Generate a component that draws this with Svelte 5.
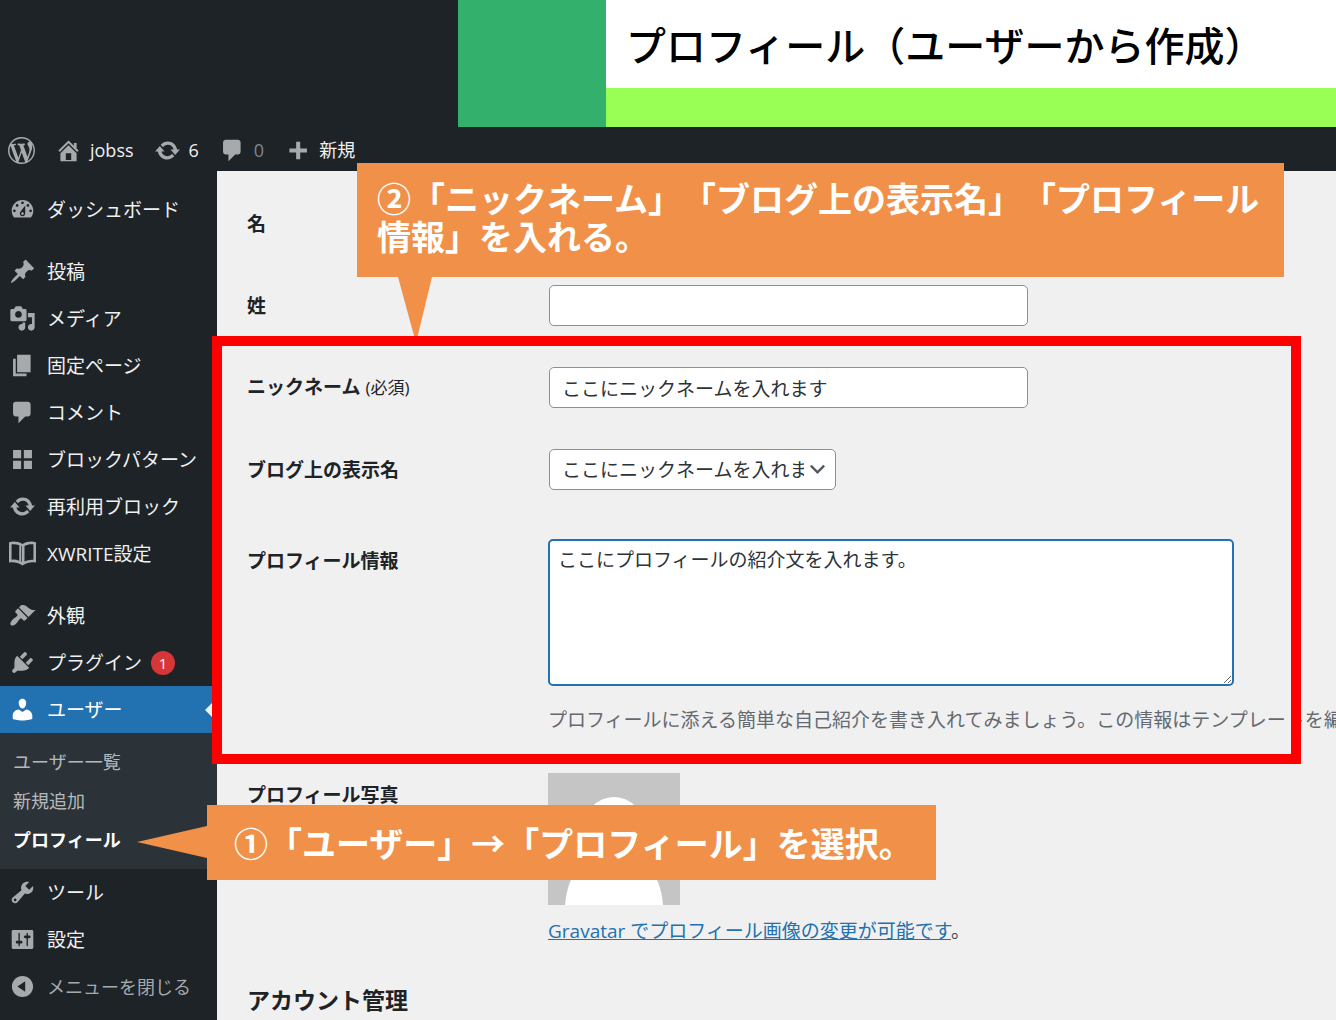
<script>
	const icons = {
		wordpress:
			'M20 10c0-5.51-4.49-10-10-10C4.48 0 0 4.49 0 10c0 5.52 4.48 10 10 10 5.51 0 10-4.48 10-10zM7.78 15.37L4.37 6.22c.55-.02 1.17-.08 1.17-.08.5-.06.44-1.13-.06-1.11 0 0-1.45.11-2.37.11-.18 0-.37 0-.58-.01C4.12 2.69 6.87 1.11 10 1.11c2.33 0 4.45.87 6.05 2.34-.68-.11-1.65.39-1.65 1.58 0 .74.45 1.36.9 2.1.35.61.55 1.36.55 2.46 0 1.49-1.4 5-1.4 5l-3.03-8.37c.54-.02.82-.17.82-.17.5-.05.44-1.25-.06-1.22 0 0-1.44.12-2.38.12-.87 0-2.33-.12-2.33-.12-.5-.03-.56 1.2-.06 1.22l.92.08 1.26 3.41zM17.41 10c.24-.64.74-1.87.43-4.25.7 1.29 1.05 2.71 1.05 4.25 0 3.29-1.73 6.24-4.4 7.78.97-2.59 1.94-5.2 2.92-7.78zM6.1 18.09C3.12 16.65 1.11 13.53 1.11 10c0-1.3.23-2.48.72-3.59C3.25 10.3 4.67 14.2 6.1 18.09zm4.03-6.63l2.58 6.98c-.86.29-1.76.45-2.71.45-.79 0-1.57-.11-2.29-.33.81-2.38 1.62-4.74 2.42-7.1z',
		home: 'M16 8.5l1.53 1.53-1.06 1.06L10 4.6l-6.47 6.49-1.06-1.06L10 2.5l4 4v-2h2v4zm-6-2.46l6 5.99V18H4v-5.97zM12 17v-5H8v5h4z',
		update:
			'M10.2 3.28c3.53 0 6.43 2.61 6.92 6h2.08l-3.5 4-3.5-4h2.32c-.45-1.97-2.21-3.45-4.32-3.45-1.45 0-2.73.71-3.54 1.78L4.95 5.66C6.23 4.2 8.11 3.28 10.2 3.28zm-.4 13.44c-3.52 0-6.43-2.61-6.92-6H.8l3.5-4c1.17 1.33 2.33 2.67 3.5 4H5.48c.45 1.97 2.21 3.45 4.32 3.45 1.45 0 2.73-.71 3.54-1.78l1.71 1.95c-1.28 1.46-3.15 2.38-5.25 2.38z',
		comment:
			'M5 2h9c1.1 0 2 .9 2 2v7c0 1.1-.9 2-2 2h-2l-5 5v-5H5c-1.1 0-2-.9-2-2V4c0-1.1.9-2 2-2z',
		plus: 'M17 8.5v3h-5v5H9v-5H4v-3h5v-5h3v5h5z',
		dashboard:
			'M3.76 16h12.48c1.1-1.37 1.76-3.11 1.76-5 0-4.42-3.58-8-8-8s-8 3.58-8 8c0 1.89.66 3.63 1.76 5zM10 4c.55 0 1 .45 1 1s-.45 1-1 1-1-.45-1-1 .45-1 1-1zM6 6c.55 0 1 .45 1 1s-.45 1-1 1-1-.45-1-1 .45-1 1-1zm8 0c.55 0 1 .45 1 1s-.45 1-1 1-1-.45-1-1 .45-1 1-1zm-5.37 5.55L12 7v6c0 1.1-.9 2-2 2s-2-.9-2-2c0-.57.24-1.08.63-1.45zM4 10c.55 0 1 .45 1 1s-.45 1-1 1-1-.45-1-1 .45-1 1-1zm12 0c.55 0 1 .45 1 1s-.45 1-1 1-1-.45-1-1 .45-1 1-1zm-5 3c0-.55-.45-1-1-1s-1 .45-1 1 .45 1 1 1 1-.45 1-1z',
		post: 'M10.44 3.02l1.82-1.82 6.36 6.35-1.83 1.82c-1.05-.68-2.48-.57-3.41.36l-.75.75c-.92.93-1.04 2.35-.35 3.41l-1.83 1.82-2.41-2.41-2.8 2.79c-.42.42-3.38 2.71-3.8 2.29s1.86-3.39 2.28-3.81l2.79-2.79L4.1 9.36l1.83-1.82c1.05.69 2.48.57 3.4-.36l.75-.75c.93-.92 1.05-2.35.36-3.41z',
		media:
			'M13 11V4c0-.55-.45-1-1-1h-1.67L9 1H5L3.67 3H2c-.55 0-1 .45-1 1v7c0 .55.45 1 1 1h10c.55 0 1-.45 1-1zM7 4.5c1.38 0 2.5 1.12 2.5 2.5S8.38 9.5 7 9.5 4.5 8.38 4.5 7 5.62 4.5 7 4.5zM14 6h5v10.5c0 1.38-1.12 2.5-2.5 2.5S14 17.88 14 16.5s1.12-2.5 2.5-2.5c.17 0 .34.02.5.05V9h-3V6zm-4 8.05V13h2v3.5c0 1.38-1.12 2.5-2.5 2.5S7 17.88 7 16.5 8.12 14 9.5 14c.17 0 .34.02.5.05z',
		page: 'M6 15V2h10v13H6zm-1 1h8v2H3V5h2v11z',
		blocks: 'M9 9V3H3v6h6zm8 0V3h-6v6h6zm-8 8v-6H3v6h6zm8 0v-6h-6v6h6z',
		book: 'M0 1.6c3.4-.9 6.6-.5 10 1.3 3.4-1.8 6.6-2.2 10-1.3v15c-3.6-.5-6.7 0-10 2.3-3.3-2.3-6.4-2.800-10-2.3zM1.9 3.2v11.400c2-.2 3.900 0 5.700.7V3.900c-1.700-.7-3.700-.9-5.700-.7zM9.100 4.500v11.500l.5.300V4.700zM11.500 4.500v11.500c2.100-1.100 4.300-1.600 6.600-1.400V3.200c-2.300-.3-4.500.1-6.600 1.300z',
		brush:
			'M14.48 11.06L7.41 3.99l1.5-1.5c.5-.56 2.3-.47 3.51.32 1.21.8 1.43 1.28 2.91 2.1 1.18.64 2.45 1.26 4.45.85zm-.71.71L6.7 4.7 4.93 6.47c-.39.39-.39 1.02 0 1.41l1.06 1.06c.39.39.39 1.03 0 1.42-.6.6-1.43 1.11-2.21 1.69-.35.26-.7.53-1.01.84C1.43 14.23.4 16.08 1.4 17.07c.99 1 2.84-.03 4.18-1.36.31-.31.58-.66.85-1.02.57-.78 1.08-1.61 1.69-2.21.39-.39 1.02-.39 1.41 0l1.06 1.06c.39.39 1.02.39 1.41 0z',
		plugin:
			'M13.11 4.36L9.87 7.6 8 5.73l3.24-3.24c.35-.34 1.05-.2 1.56.32.52.51.66 1.21.31 1.55zm-8 1.77l.91-1.12 9.01 9.01-1.19.84c-.71.71-2.63 1.16-3.82 1.16H6.14L4.9 17.26c-.59.59-1.54.59-2.12 0-.59-.58-.59-1.53 0-2.12l1.24-1.24v-3.88c0-1.13.4-3.19 1.09-3.89zm7.26 3.97l3.24-3.24c.34-.35 1.04-.21 1.55.31.52.51.66 1.21.31 1.55l-3.24 3.25z',
		user: 'M10 9.25c-2.27 0-2.73-3.44-2.73-3.44C7 4.02 7.82 2 9.97 2c2.16 0 2.98 2.02 2.71 3.81 0 0-.41 3.44-2.68 3.44zm0 2.57L12.72 10c2.39 0 4.52 2.33 4.52 4.53v2.49s-3.65 1.13-7.24 1.13c-3.65 0-7.24-1.13-7.24-1.13v-2.49c0-2.25 1.94-4.48 4.47-4.48z',
		tools: 'M16.68 9.77c-1.34 1.34-3.3 1.67-4.95.99l-5.41 6.52c-.99.99-2.59.99-3.58 0s-.99-2.59 0-3.57l6.52-5.42c-.68-1.65-.35-3.61.99-4.95 1.28-1.28 3.12-1.62 4.72-1.06l-2.89 2.89 2.82 2.82 2.86-2.87c.53 1.58.18 3.39-1.08 4.65zM3.81 16.21c.4.39 1.04.39 1.43 0 .4-.4.4-1.04 0-1.43-.39-.4-1.03-.4-1.43 0-.39.39-.39 1.03 0 1.43z',
		settings:
			'M18 16V4c0-.55-.45-1-1-1H3c-.55 0-1 .45-1 1v12c0 .55.45 1 1 1h14c.55 0 1-.45 1-1zM8 11h1c.55 0 1 .45 1 1s-.45 1-1 1H8v1.5c0 .28-.22.5-.5.5s-.5-.22-.5-.5V13H6c-.55 0-1-.45-1-1s.45-1 1-1h1V5.5c0-.28.22-.5.5-.5s.5.22.5.5V11zm5-2h-1c-.55 0-1-.45-1-1s.45-1 1-1h1V5.5c0-.28.22-.5.5-.5s.5.22.5.5V7h1c.55 0 1 .45 1 1s-.45 1-1 1h-1v5.5c0 .28-.22.5-.5.5s-.5-.22-.5-.5V9z',
		collapse:
			'M10 2.16c4.33 0 7.84 3.51 7.84 7.84s-3.51 7.84-7.84 7.84S2.16 14.33 2.16 10 5.71 2.16 10 2.16zm2 11.72V6.12L6.18 9.97z'
	};

	const menuGroups = [
		[{ icon: 'dashboard', label: 'ダッシュボード' }],
		[
			{ icon: 'post', label: '投稿' },
			{ icon: 'media', label: 'メディア' },
			{ icon: 'page', label: '固定ページ' },
			{ icon: 'comment', label: 'コメント' },
			{ icon: 'blocks', label: 'ブロックパターン' },
			{ icon: 'update', label: '再利用ブロック' },
			{ icon: 'book', label: 'XWRITE設定' }
		],
		[
			{ icon: 'brush', label: '外観' },
			{ icon: 'plugin', label: 'プラグイン', badge: 1 },
			{
				icon: 'user',
				label: 'ユーザー',
				current: true,
				children: ['ユーザー一覧', '新規追加', 'プロフィール']
			},
			{ icon: 'tools', label: 'ツール' },
			{ icon: 'settings', label: '設定' }
		]
	];

	let firstName = $state('');
	let lastName = $state('');
	let nickname = $state('ここにニックネームを入れます');
	let bio = $state('ここにプロフィールの紹介文を入れます。');
</script>

{#snippet icon(name)}
	<svg class="icon" viewBox="0 0 20 20" fill-rule="evenodd" aria-hidden="true">
		<path d={icons[name]} />
	</svg>
{/snippet}

<div class="page">
	<header class="banner">
		<div class="banner-block"></div>
		<h1>プロフィール（ユーザーから作成）</h1>
	</header>

	<nav class="adminbar">
		<a href="#wp" aria-label="WordPress">{@render icon('wordpress')}</a>
		<a href="#site">{@render icon('home')}<span>jobss</span></a>
		<a href="#updates">{@render icon('update')}<span>6</span></a>
		<a href="#comments" class="muted">{@render icon('comment')}<span>0</span></a>
		<a href="#new">{@render icon('plus')}<span>新規</span></a>
	</nav>

	<div class="columns">
		<nav class="sidebar">
			{#each menuGroups as group}
				<ul class="group">
					{#each group as item}
						<li>
							<a href="#menu" class="item" class:current={item.current}>
								{@render icon(item.icon)}
								<span>{item.label}</span>
								{#if item.badge}<span class="badge">{item.badge}</span>{/if}
							</a>
							{#if item.children}
								<ul class="submenu">
									{#each item.children as child}
										<li><a href="#sub" class:active={child === 'プロフィール'}>{child}</a></li>
									{/each}
								</ul>
							{/if}
						</li>
					{/each}
				</ul>
			{/each}
			<button type="button" class="item collapse">
				{@render icon('collapse')}<span>メニューを閉じる</span>
			</button>
		</nav>

		<main>
			<form>
				<div class="row">
					<label for="first">名</label>
					<div><input id="first" type="text" bind:value={firstName} /></div>
				</div>
				<div class="row">
					<label for="last">姓</label>
					<div><input id="last" type="text" bind:value={lastName} /></div>
				</div>
				<div class="row">
					<label for="nick">ニックネーム <small>(必須)</small></label>
					<div><input id="nick" type="text" bind:value={nickname} /></div>
				</div>
				<div class="row">
					<label for="display">ブログ上の表示名</label>
					<div class="select">
						<select id="display">
							<option>ここにニックネームを入れます</option>
						</select>
						<svg viewBox="0 0 20 20" aria-hidden="true"><path d="M3 6l7 7 7-7" /></svg>
					</div>
				</div>
				<div class="row tall">
					<label for="bio">プロフィール情報</label>
					<div>
						<textarea id="bio" bind:value={bio}></textarea>
						<p class="description">
							プロフィールに添える簡単な自己紹介を書き入れてみましょう。この情報はテンプレートを編集
						</p>
					</div>
				</div>
				<div class="row tall">
					<span class="label">プロフィール写真</span>
					<div>
						<svg class="avatar" viewBox="0 0 132 132" role="img" aria-label="プロフィール写真">
							<rect width="132" height="132" fill="#c5c5c5" />
							<ellipse cx="66" cy="57" rx="31" ry="33" fill="#fff" />
							<path d="M17 132c3-35 20-50 49-50s46 15 49 50z" fill="#fff" />
						</svg>
						<p class="gravatar"><a href="#gravatar">Gravatar でプロフィール画像の変更が可能です</a>。</p>
					</div>
				</div>
				<h2>アカウント管理</h2>
			</form>
		</main>
	</div>

	<!-- step notes laid over the admin screen -->
	<div class="callout step-two">
		②「ニックネーム」「ブログ上の表示名」「プロフィール情報」を入れる。
		<svg class="tail" viewBox="0 0 34 66" aria-hidden="true"><path d="M0 0h34L18 66z" /></svg>
	</div>
	<div class="frame"></div>
	<div class="callout step-one">
		①「ユーザー」→「プロフィール」を選択。
		<svg class="tail" viewBox="0 0 70 32" aria-hidden="true"><path d="M70 0v32L0 16z" /></svg>
	</div>
</div>

<style>
	:global(body) {
		margin: 0;
		background: #f0f0f0;
	}
	.page {
		position: relative;
		display: flex;
		flex-direction: column;
		min-height: 100vh;
		overflow: hidden;
		background: #1d2327;
		color: #3c434a;
		font-family: 'Open Sans', 'Noto Sans CJK JP', sans-serif;
		font-size: 19px;
		line-height: 26px;
		text-spacing-trim: space-all;
	}
	ul {
		list-style: none;
		margin: 0;
		padding: 0;
	}
	a {
		text-decoration: none;
	}
	.icon {
		flex: none;
		width: 27px;
		height: 27px;
		fill: #a7aaad;
	}

	/* title banner */
	.banner {
		display: flex;
		margin-left: 458px;
		height: 127px;
	}
	.banner-block {
		flex: none;
		width: 148px;
		background: #33b06b;
	}
	h1 {
		flex: 1;
		margin: 0;
		padding: 4px 20px;
		border-bottom: 39px solid #99ff55;
		background: #fff;
		color: #000;
		font-family: 'Noto Sans CJK JP', sans-serif;
		font-size: 40px;
		font-weight: 500;
		line-height: 80px;
		white-space: nowrap;
	}

	/* admin bar */
	.adminbar {
		display: flex;
		align-items: center;
		gap: 20px;
		box-sizing: border-box;
		height: 44px;
		padding: 2px 8px 0;
	}
	.adminbar a {
		display: flex;
		align-items: center;
		gap: 8px;
		color: #f0f0f1;
		font-size: 18px;
	}
	.adminbar .muted {
		color: #80868b;
	}

	.columns {
		display: flex;
		flex: 1;
	}

	/* side menu */
	.sidebar {
		flex: none;
		box-sizing: border-box;
		width: 217px;
		padding-top: 15px;
	}
	.group + .group {
		margin-top: 15px;
	}
	.item {
		position: relative;
		display: flex;
		align-items: center;
		gap: 11px;
		height: 47px;
		padding-left: 9px;
		color: #f0f0f1;
		white-space: nowrap;
	}
	.item.current {
		background: #2271b1;
		color: #fff;
	}
	.item.current .icon {
		fill: #fff;
	}
	.item.current::after {
		content: '';
		position: absolute;
		right: 0;
		border: 12px solid transparent;
		border-left: 0;
		border-right-color: #f0f0f0;
	}
	.badge {
		width: 24px;
		margin-left: -2px;
		border-radius: 12px;
		background: #d63638;
		color: #fff;
		font-size: 15px;
		line-height: 24px;
		text-align: center;
	}
	.submenu {
		padding: 10px 0 9px;
		background: #2c3338;
	}
	.submenu a {
		display: block;
		padding-left: 13px;
		color: #b4b9be;
		font-size: 18px;
		line-height: 39px;
	}
	.submenu .active {
		color: #fff;
		font-weight: 700;
	}
	.collapse {
		width: 100%;
		border: 0;
		background: none;
		color: #a7aaad;
		font: inherit;
		font-size: 18px;
	}

	/* profile form */
	main {
		flex: 1;
		min-width: 0;
		overflow: hidden;
		background: #f0f0f0;
	}
	form {
		padding: 12px 0 0 30px;
	}
	.row {
		display: grid;
		grid-template-columns: 301px minmax(0, 1fr);
		align-items: center;
		padding: 20px 0 21px;
	}
	.row.tall {
		align-items: start;
		padding: 28px 0 12px;
	}
	.tall > label,
	.label {
		padding-top: 9px;
	}
	label,
	.label {
		color: #1d2327;
		font-weight: 700;
	}
	small {
		font-size: 17px;
		font-weight: 400;
	}
	input,
	select,
	textarea {
		box-sizing: border-box;
		border: 1px solid #8c8f94;
		border-radius: 5px;
		background: #fff;
		color: #2c3338;
		font: inherit;
	}
	input,
	select {
		display: block;
		height: 41px;
		margin: 0 1px;
		padding: 0 12px;
	}
	input {
		width: 479px;
	}
	.select {
		position: relative;
		width: 289px;
	}
	select {
		width: 287px;
		padding-right: 31px;
		appearance: none;
	}
	.select svg {
		position: absolute;
		top: 11px;
		right: 10px;
		width: 19px;
		height: 19px;
		fill: none;
		stroke: #50575e;
		stroke-width: 2.5;
		pointer-events: none;
	}
	textarea {
		display: block;
		width: 686px;
		height: 147px;
		padding: 6px 8px;
		border: 2px solid #2271b1;
		outline: none;
	}
	p {
		margin: 0;
	}
	.description {
		margin-top: 21px;
		color: #646970;
		white-space: nowrap;
	}
	.avatar {
		display: block;
		width: 132px;
		height: 132px;
	}
	.gravatar {
		margin-top: 13px;
	}
	.gravatar a {
		color: #2271b1;
		text-decoration: underline;
	}
	h2 {
		margin: 28px 0 0;
		color: #1d2327;
		font-size: 23px;
		line-height: 32px;
	}

	/* notes */
	.callout {
		position: absolute;
		box-sizing: border-box;
		background: #f19149;
		color: #fff;
		font-family: 'Noto Sans CJK JP', sans-serif;
		font-size: 34px;
		font-weight: 700;
		line-height: 38px;
	}
	.tail {
		position: absolute;
		fill: #f19149;
	}
	.step-two {
		top: 163px;
		left: 357px;
		width: 927px;
		height: 114px;
		padding: 16px 20px;
	}
	.step-two .tail {
		top: 100%;
		left: 41px;
		width: 34px;
		height: 66px;
	}
	.step-one {
		top: 805px;
		left: 207px;
		width: 729px;
		height: 75px;
		padding: 19px 27px;
		white-space: nowrap;
	}
	.step-one .tail {
		top: 21px;
		right: 100%;
		width: 70px;
		height: 32px;
	}
	.frame {
		position: absolute;
		top: 336px;
		left: 212px;
		box-sizing: border-box;
		width: 1089px;
		height: 428px;
		border: 10px solid #ff0000;
		pointer-events: none;
	}
</style>
